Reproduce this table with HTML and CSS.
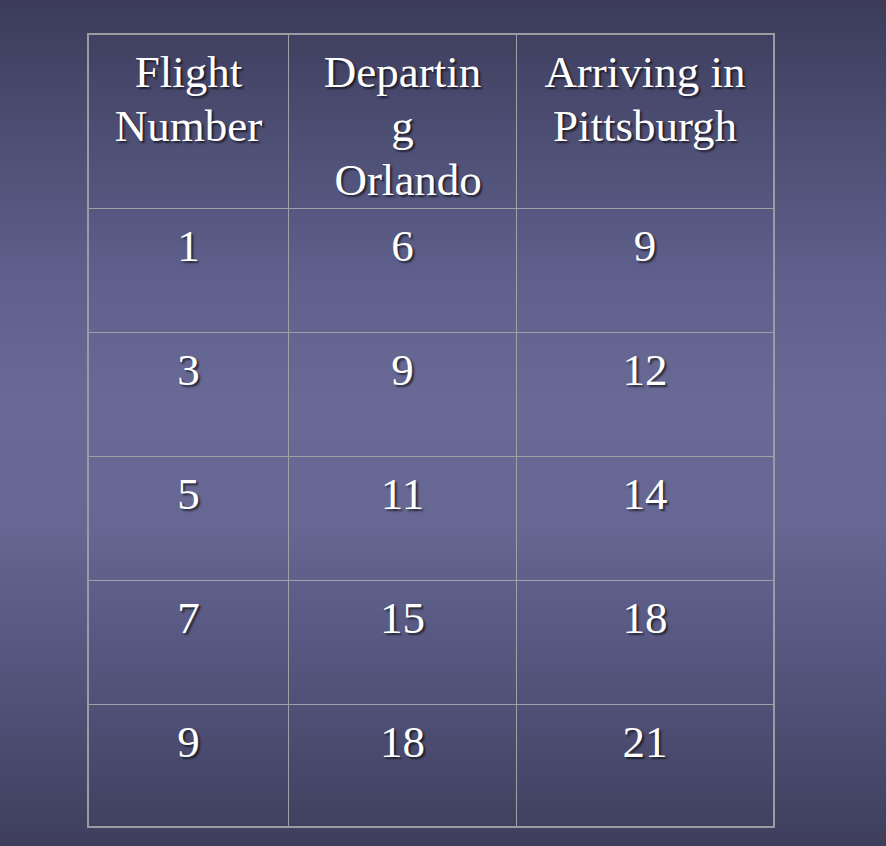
FILE: index.html
```html
<!DOCTYPE html>
<html>
<head>
<meta charset="utf-8">
<link rel="stylesheet" href="styles.css">
</head>
<body>
<div class="table">
  <div class="cell head">Flight<br>Number</div>
  <div class="cell head">Departin<br>g<br>&nbsp;Orlando</div>
  <div class="cell head last-col">Arriving in<br>Pittsburgh</div>

  <div class="cell">1</div>
  <div class="cell">6</div>
  <div class="cell last-col">9</div>

  <div class="cell">3</div>
  <div class="cell">9</div>
  <div class="cell last-col">12</div>

  <div class="cell">5</div>
  <div class="cell">11</div>
  <div class="cell last-col">14</div>

  <div class="cell">7</div>
  <div class="cell">15</div>
  <div class="cell last-col">18</div>

  <div class="cell last-row">9</div>
  <div class="cell last-row">18</div>
  <div class="cell last-row last-col">21</div>
</div>
</body>
</html>
```

FILE: styles.css
```css
html, body {
  margin: 0;
  padding: 0;
  height: 100%;
}
body {
  width: 886px;
  height: 846px;
  overflow: hidden;
  background: linear-gradient(to bottom, #3b3b59 0%, #4c4d72 15%, #5f608c 33%, #686995 47%, #666792 62%, #53547c 80%, #3e3e5c 100%);
  font-family: "Liberation Serif", "Times New Roman", serif;
  color: #ffffff;
}
.table {
  display: grid;
  grid-template-columns: 200px 228px 256px;
  grid-template-rows: 174px 124px 124px 124px 124px 121px;
  width: fit-content;
  margin: 33px 0 0 87px;
  border: 2px solid #9c9ca0;
}
.cell {
  box-sizing: border-box;
  border-right: 1px solid #a0a0a6;
  border-bottom: 1px solid #a0a0a6;
  padding-top: 10px;
  text-align: center;
  font-size: 45px;
  line-height: 54px;
  text-shadow: 2px 2px 2px rgba(0, 0, 0, 0.6);
}
.last-col {
  border-right: none;
}
.last-row {
  border-bottom: none;
}
```
